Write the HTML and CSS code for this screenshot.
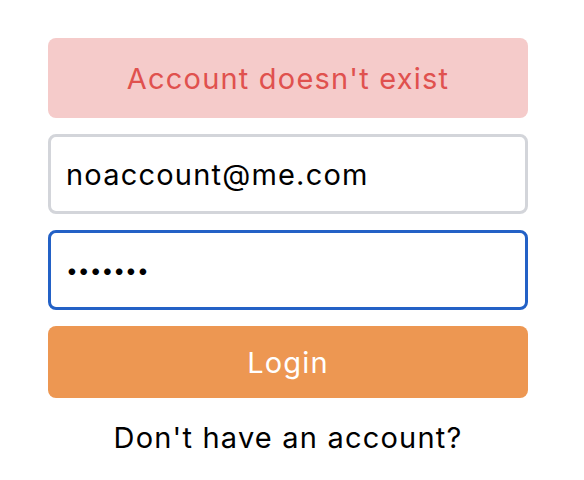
FILE: index.html
```html
<!DOCTYPE html>
<html>
<head>
<meta charset="utf-8">
<link rel="stylesheet" href="styles.css">
</head>
<body>
<form class="login">
  <div class="alert">Account doesn't exist</div>
  <input class="field" type="email" value="noaccount@me.com">
  <input class="field field-focus field-secret" type="password" value="1234567">
  <button class="btn" type="button">Login</button>
  <p class="signup">Don't have an account?</p>
</form>
</body>
</html>
```
FILE: styles.css
```css
* { box-sizing: border-box; }
body {
  margin: 0;
  background: #fff;
  font-family: Inter, "Noto Sans", sans-serif;
  font-weight: 400;
}
.login {
  width: 480px;
  margin: 38px 0 0 48px;
  display: flex;
  flex-direction: column;
  gap: 16px;
}
.alert {
  height: 80px;
  border-radius: 8px;
  background: #f5cbca;
  color: #e0514e;
  font-size: 29px;
  letter-spacing: 1.2px;
  display: flex;
  align-items: center;
  justify-content: center;
}
.field {
  height: 80px;
  border: 3px solid #d3d5da;
  border-radius: 8px;
  padding: 0 15px;
  font-family: inherit;
  font-weight: inherit;
  font-size: 29px;
  letter-spacing: 1.2px;
  color: #000;
  background: #fff;
  outline: none;
}
.field-focus {
  border-color: #2361c6;
}
.field-secret {
  font-size: 21px;
  letter-spacing: 0;
}
.btn {
  height: 72px;
  border: 0;
  border-radius: 8px;
  background: #ed9752;
  color: #fff;
  font-family: inherit;
  font-weight: inherit;
  font-size: 29px;
  letter-spacing: 1.2px;
}
.signup {
  margin: 6px 0 0;
  text-align: center;
  font-size: 29px;
  letter-spacing: 1.2px;
  color: #000;
}
```
